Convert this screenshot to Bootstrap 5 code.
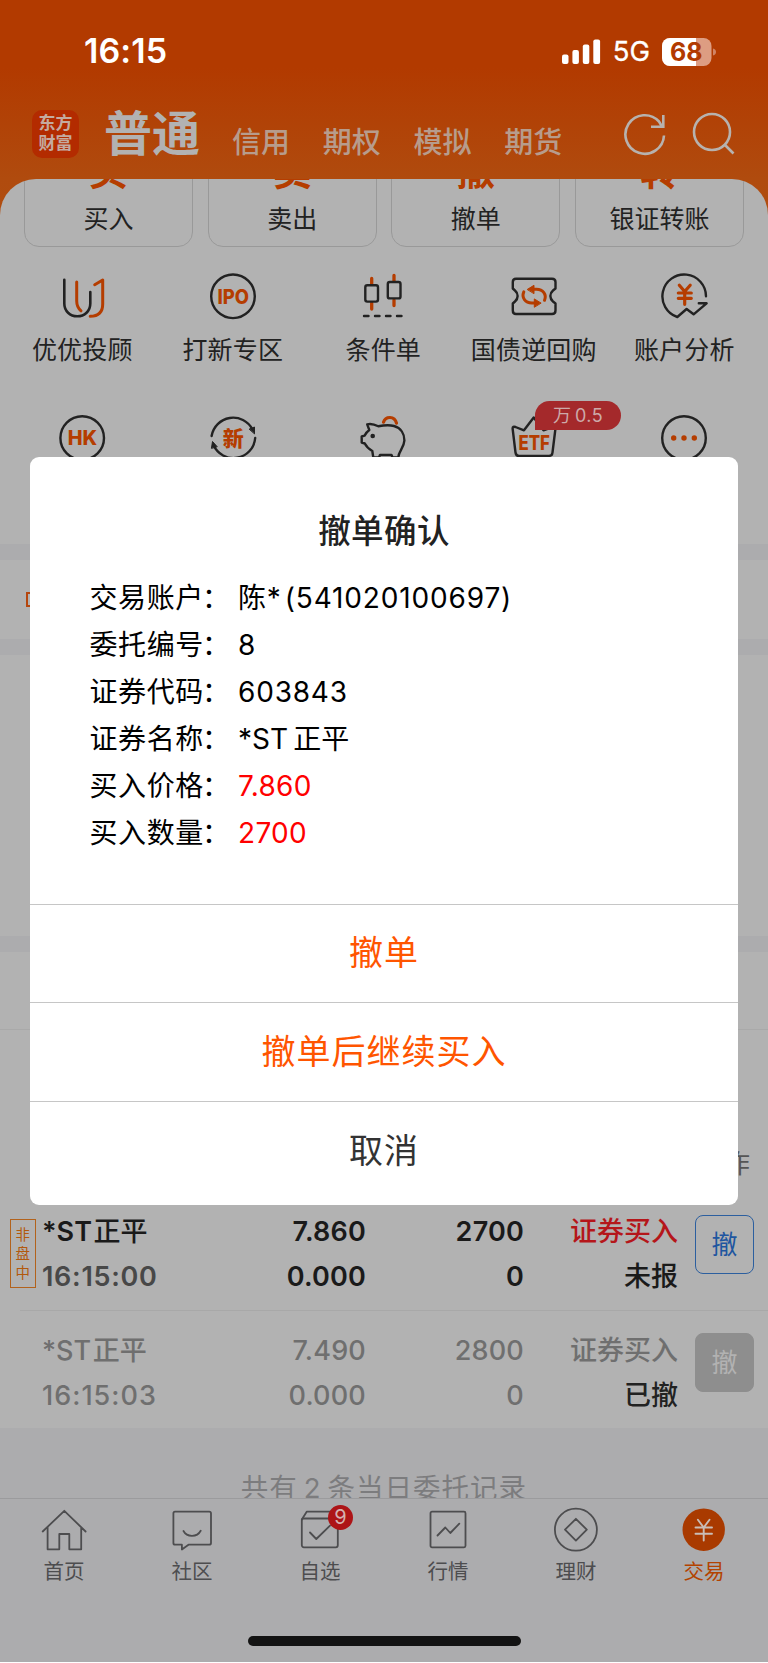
<!DOCTYPE html>
<html lang="zh-CN">
<head>
<meta charset="utf-8">
<meta name="viewport" content="width=device-width, initial-scale=1">
<title>撤单确认</title>
<link rel="stylesheet" href="https://cdn.jsdelivr.net/npm/bootstrap@5.3.0/dist/css/bootstrap.min.css">
<style>
:root{--ink:#222;--flame:#b53d00;--sheet:#b2b2b2;--band:#acacae}
body{font-family:Inter,"Noto Sans CJK SC",sans-serif;background:#fff;color:var(--ink);line-height:1.2}
svg{display:block;fill:none;stroke-linecap:round;stroke-linejoin:round}
svg text{stroke:none;font-family:Inter,"Noto Sans CJK SC",sans-serif}
.screen{width:768px;height:1662px;background:var(--sheet)}
.top-zone{height:220px;background:linear-gradient(#b23a00 0,#b23a00 68px,#b04b0e 179px,#b04d10 100%)}
.status-bar{height:103px;padding:0 52px 0 84px}
.clock{font-size:34px;font-weight:600;letter-spacing:.1px}
.net{font-size:27.5px;font-weight:400;-webkit-text-stroke:.3px #fff;margin-left:12px}
.tabs-line{height:76px;padding:0 33px 0 32px}
.logo{width:47px;height:48px;border-radius:10px;background:#b32b00;color:#c4aaa0;font-size:17px;line-height:20px;font-weight:700;padding-top:3px;margin-top:7px}
.tab-main{font-size:48px;font-weight:700;color:#b2b2b2;margin-left:25px;line-height:62px}
.tab-row{gap:32.7px;margin-left:32px;padding-top:19.5px}
.tab-sub{font-size:29px;font-weight:500;color:#b79c8c;line-height:40px}
.sheet-top{margin-top:-41px;background:var(--sheet);border-radius:36px 36px 0 0;height:365px;overflow:hidden}
.quick{height:68px;padding:0 24px;gap:14.5px}
.quick-item{height:130px;border:1.5px solid #999;border-radius:15px;font-size:25px}
.quick-item b{font-size:39px;line-height:44px;color:var(--flame);font-weight:700}
.quick-item span{line-height:36px;margin:8px 0 9.5px}
.svc{margin:25px 8.5px 0 7px}
.svc .item{width:20%}
.svc .cap{font-size:25px;line-height:30px;margin-top:15px;white-space:nowrap;letter-spacing:.15px}
.svc.second{margin-top:48.5px}
.fee-tag{left:76.5px;top:-13px;width:86px;height:29px;border-radius:14.5px 14.5px 14.5px 0;background:#a4292b;color:#cda9a9;font-size:18px;line-height:29px;letter-spacing:.4px}
.stripe{height:16px;background:var(--band)}
.notice{height:79px;padding-left:26px}
.notice i{width:14px;height:15px;border:2px solid #b5460e}
.hold{height:281px}
.seg{height:78px;border-bottom:1px solid #a9a9a9}
.thead-line{height:161px;padding:0 18px 12px;color:#555;font-size:26px}
.order{height:118.5px;position:relative;font-size:27px;line-height:45px;font-weight:600;padding:18px 14px 0 42px;color:#1a1a1a}
.order>div{white-space:nowrap}
.order .zh{font-weight:500}
.order .c-name .zh{margin-left:-3px}
.order .clk{letter-spacing:.7px}
.order+.order{border-top:1px solid #a8a8a8;margin-left:20px;padding-left:22px;padding-top:17.5px}
.c-name{width:151px}.c-price{width:173px;letter-spacing:.2px}.c-qty{width:158px;letter-spacing:.2px}.c-state{width:154px}
.is-void{color:#6f6f6f}
.is-void .c-name,.is-void .c-price,.is-void .c-qty{font-weight:500}
.is-void .clk{letter-spacing:1px}
.cut{width:59px;height:59px;border:1.5px solid #2c5f9f;border-radius:8px;color:#1f56a0;margin:6px 0 0 17px;font-size:26px;line-height:58px;font-weight:400}
.cut.off{background:#8e8e8e;border-color:#8e8e8e;color:#b2b2b2;margin-top:5px}
.off-hours{left:10px;top:27.5px;width:26px;height:69.5px;border:1.3px solid #b2621c;color:#b2590d;font-size:14.5px;line-height:19px;padding:5px 4.500px 0;font-weight:400}
.tail{height:70px;background:var(--band);overflow:hidden;color:#7c7c7e;font-size:27.5px;line-height:36px;padding-top:42px;letter-spacing:1px}
.tabbar{height:165px;background:var(--band);border-top:1px solid #9b9b9d;padding-top:7px}
.tabbar .item{width:128px;font-size:20.5px;line-height:28px;color:#4d4d4f}
.tabbar .cap{margin-top:3.5px}
.count{left:72px;top:-1px;width:25px;height:25px;border-radius:50%;background:#ad1417;color:#d5b0b0;font-size:20px;line-height:25px}
.home-line{width:273px;height:10px;border-radius:5px;background:#131313;margin:50px auto 0}
.dialog-box{width:708px;height:748px;background:#fff;border-radius:9px}
.dlg-title{font-size:32.5px;font-weight:500;line-height:40px;margin-top:55px;color:#222;letter-spacing:.4px}
.facts{margin:22.5px 0 0 59.5px;color:#000;font-size:28px;line-height:47.1px}
.facts dt{width:148.5px;font-weight:400;letter-spacing:.6px}
.facts dt span{margin-left:-2px}
.facts dd{margin:0}
.facts .acct{letter-spacing:.85px}
.facts .acct span{margin-left:3px}
.facts .code{letter-spacing:.8px}
.facts .hot{color:#f00;letter-spacing:.3px}
.act{height:98.2px;border-top:1.5px solid #c6c6c6;font-size:34px;letter-spacing:1px;color:#ff5500}
.act.dismiss{height:104.5px;color:#333;padding-bottom:4px}
</style>
</head>
<body>
<div class="screen position-relative overflow-hidden">
  <header class="top-zone">
    <div class="status-bar d-flex align-items-center text-white">
      <span class="clock">16:15</span>
      <svg class="ms-auto" width="39" height="26" viewBox="0 0 39 26"><g fill="#fff"><rect y="15.5" width="6.5" height="9.5" rx="2"/><rect x="10.4" y="11" width="6.5" height="14" rx="2"/><rect x="20.8" y="5.5" width="6.5" height="19.5" rx="2"/><rect x="31.3" y=".5" width="6.8" height="24.5" rx="2"/></g></svg>
      <span class="net">5G</span>
      <svg class="ms-2 ps-1" width="58" height="28" viewBox="0 0 54 28"><defs><clipPath id="lvl"><rect width="34" height="28"/></clipPath></defs><rect width="49.5" height="28" rx="8" fill="#dd9d82"/><rect width="49.5" height="28" rx="8" fill="#fff" clip-path="url(#lvl)"/><path d="M51 10.5q3 .8 3 3.5t-3 3.500z" fill="#d08465"/><text x="24.300" y="22.800" text-anchor="middle" font-size="25" font-weight="700" fill="#b23a00">68</text></svg>
    </div>
    <nav class="tabs-line d-flex">
      <div class="logo text-center">东方<br>财富</div>
      <div class="tab-main">普通</div>
      <div class="tab-row d-flex">
        <span class="tab-sub">信用</span><span class="tab-sub">期权</span><span class="tab-sub">模拟</span><span class="tab-sub">期货</span>
      </div>
      <svg class="ms-auto mt-2" width="44" height="46" viewBox="0 0 44 46" stroke="#b7b2ae" stroke-width="2.600"><path stroke-linecap="butt" stroke-linejoin="miter" d="M41 24.500A19.300 19.300 0 1 1 36 10.500L39 15.500M40.300 4V15.800H28"/></svg>
      <svg class="mt-2" style="margin-left:23.5px" width="45" height="46" viewBox="0 0 45 46" stroke="#b7b2ae" stroke-width="2.600"><circle cx="22" cy="21" r="18"/><path stroke-linecap="butt" d="M34.500 33.500L43.500 42.500"/></svg>
    </nav>
  </header>

  <section class="sheet-top position-relative">
    <div class="quick d-flex align-items-end">
      <div class="quick-item flex-fill w-25 d-flex flex-column justify-content-end align-items-center"><b>买</b><span>买入</span></div>
      <div class="quick-item flex-fill w-25 d-flex flex-column justify-content-end align-items-center"><b>卖</b><span>卖出</span></div>
      <div class="quick-item flex-fill w-25 d-flex flex-column justify-content-end align-items-center"><b>撤</b><span>撤单</span></div>
      <div class="quick-item flex-fill w-25 d-flex flex-column justify-content-end align-items-center"><b>转</b><span>银证转账</span></div>
    </div>
    <div class="svc d-flex">
      <div class="item d-flex flex-column align-items-center">
        <svg width="48" height="48" stroke="#222" stroke-width="2.600"><path d="M6.300 7.700V31.500C6.300 39 12 44.300 19.300 44.300S32.300 39 32.300 31.500V20"/><g stroke="#b53d00" stroke-width="3"><path d="M18.700 10V29Q18.700 35 23 38.800M36.700 12.700L44.700 8V32Q44.700 44.300 32.200 44.300"/></g></svg>
        <div class="cap">优优投顾</div>
      </div>
      <div class="item d-flex flex-column align-items-center">
        <svg width="48" height="48" stroke="#222" stroke-width="2.400"><circle cx="24" cy="24.300" r="21.800"/><text x="24.200" y="31.500" text-anchor="middle" textLength="31.500" lengthAdjust="spacingAndGlyphs" font-size="20" font-weight="800" fill="#b53d00">IPO</text></svg>
        <div class="cap">打新专区</div>
      </div>
      <div class="item d-flex flex-column align-items-center">
        <svg width="48" height="48" stroke="#222" stroke-width="2.400"><path stroke="#b53d00" stroke-width="3.300" d="M12.700 6.500V12M12.700 31V37M35 3.500V9M35 28V33.500"/><rect x="6.300" y="13.200" width="12.700" height="16.400" rx="2"/><rect x="28.800" y="10" width="12.700" height="16.400" rx="2"/><path d="M5 44h4.500M16 44h4.500M27 44h4.500M38 44h4.500"/></svg>
        <div class="cap">条件单</div>
      </div>
      <div class="item d-flex flex-column align-items-center">
        <svg width="48" height="48" stroke="#222" stroke-width="2.400"><path d="M6 6.700H42Q45.500 6.700 45.500 10V16.500L43 18.500C39.500 21.500 39.500 26.500 43 29.500L45.500 31.500V38.500Q45.500 42 42 42H6Q2.800 42 2.800 38.500V31.500L5 29.500C8.500 26.500 8.500 21.500 5 18.500L2.800 16.500V10Q2.800 6.700 6 6.700Z"/><g stroke="#b53d00" stroke-width="3"><path d="M22 17.300H26.500C33 17.300 37 22.500 34.500 28.300M26.300 30.900H21.800C15.300 30.900 11.300 25.700 13.800 19.900"/><path fill="#b53d00" stroke-width="1" d="M17.500 17.300L24 13.300V21.300ZM30.800 30.900L24.300 26.900V34.900Z"/></g></svg>
        <div class="cap">国债逆回购</div>
      </div>
      <div class="item d-flex flex-column align-items-center">
        <svg width="48" height="48" stroke="#222" stroke-width="2.400"><path d="M46 24.300A21.800 21.800 0 1 0 17.300 45L26.600 37L33.600 42.300L46.600 31.300H38.800"/><path stroke="#b53d00" stroke-width="3.200" d="M19.300 13.300L24.700 19.500L30.200 13.300M24.700 19.500V32.300M18.300 21H31.300M18.300 26.300H31.300"/></svg>
        <div class="cap">账户分析</div>
      </div>
    </div>
    <div class="svc second d-flex">
      <div class="item d-flex justify-content-center">
        <svg width="48" height="48" stroke="#222" stroke-width="2.400"><circle cx="24.200" cy="24" r="21.800"/><text x="24.500" y="31.300" text-anchor="middle" textLength="29.500" lengthAdjust="spacingAndGlyphs" font-size="20" font-weight="800" fill="#b53d00">HK</text></svg>
      </div>
      <div class="item d-flex justify-content-center">
        <svg width="48" height="48" stroke="#222" stroke-width="2.400"><path d="M2.600 22A21.800 21.800 0 0 1 43.500 15.500M46.200 24A21.800 21.800 0 0 1 4.500 31"/><path fill="#222" stroke-width="1" d="M40.500 15L45.500 13V19.500ZM2.500 34L3.500 27.500L8 32.500Z"/><text x="24.300" y="31.500" text-anchor="middle" font-size="21" font-weight="900" fill="#b53d00">新</text></svg>
      </div>
      <div class="item d-flex justify-content-center">
        <svg width="48" height="48" stroke="#222" stroke-width="2.400"><path stroke="#b53d00" stroke-width="3.200" d="M24.500 8.200C26.500 2 35.500 1.500 37.500 9.200"/><path d="M8.200 10.300Q13 9 19.300 12.300C26 11 31 11 35 12C42 14 45.500 20 45.400 26.500C45 34 39.500 37 39.300 43.500H33.500L32.500 41H21L20 43.500H14.300L13.300 37Q8 34 5.800 29.500L2.700 28.500V22.500L5.500 21.700Q7 18.500 10.300 16Z"/><circle cx="13.700" cy="22" r="2.300" fill="#222" stroke="none"/></svg>
      </div>
      <div class="item d-flex justify-content-center position-relative">
        <svg width="48" height="48" stroke="#222" stroke-width="2.400"><path d="M2.600 14.500Q2.600 12 5.500 13L14 16.300L23.700 3.500L33.500 16.300L42.500 13Q46 12 45.400 15L42.500 38.500Q42.200 42 39 42H9Q6 42 5.500 38.500Z"/><text x="24.200" y="35.800" text-anchor="middle" textLength="31.500" lengthAdjust="spacingAndGlyphs" font-size="20" font-weight="800" fill="#b53d00">ETF</text></svg>
        <span class="fee-tag position-absolute text-center">万&#8201;0.5</span>
      </div>
      <div class="item d-flex justify-content-center">
        <svg width="48" height="48" stroke="#222" stroke-width="2.400"><circle cx="24" cy="24" r="21.800"/><g fill="#b53d00" stroke="none"><circle cx="13.700" cy="24" r="2.700"/><circle cx="24" cy="24" r="2.700"/><circle cx="34.300" cy="24" r="2.700"/></g></svg>
      </div>
    </div>
  </section>

  <div class="stripe"></div>
  <div class="notice d-flex align-items-center"><i></i></div>
  <div class="stripe"></div>
  <div class="hold"></div>
  <div class="stripe"></div>
  <div class="seg"></div>
  <div class="thead-line d-flex align-items-end justify-content-end">操作</div>

  <div class="order d-flex">
    <span class="off-hours position-absolute">非盘中</span>
    <div class="c-name">*ST&#8201;<span class="zh">正平</span><br><span class="clk" style="color:#484848">16:15:00</span></div>
    <div class="c-price text-end">7.860<br>0.000</div>
    <div class="c-qty text-end">2700<br>0</div>
    <div class="c-state text-end zh"><span style="color:#b5161a">证券买入</span><br>未报</div>
    <div class="cut text-center">撤</div>
  </div>
  <div class="order d-flex is-void">
    <div class="c-name">*ST&#8201;<span class="zh">正平</span><br><span class="clk">16:15:03</span></div>
    <div class="c-price text-end">7.490<br>0.000</div>
    <div class="c-qty text-end">2800<br>0</div>
    <div class="c-state text-end zh">证券买入<br><span style="color:#222">已撤</span></div>
    <div class="cut off text-center">撤</div>
  </div>
  <div class="tail text-center">共有&#8201;2&#8201;条当日委托记录</div>

  <footer class="tabbar">
    <div class="d-flex text-center">
      <div class="item d-flex flex-column align-items-center"><svg width="48" height="48" stroke="#4d4d4f" stroke-width="1.800"><path d="M2.700 25.500L24.300 4.800L45.600 25.500M7.600 21.300V43.300H19.300V28H29.300V43.300H41.200V21.300"/></svg><div class="cap">首页</div></div>
      <div class="item d-flex flex-column align-items-center"><svg width="48" height="48" stroke="#4d4d4f" stroke-width="1.800"><path d="M7 5.600H41.200Q43 5.600 43 7.400V37Q43 38.700 41.200 38.700H20.500L13.900 43.500V38.700H7Q5.400 38.700 5.400 37V7.400Q5.400 5.600 7 5.600ZM15.500 25C19 31.500 29 31.500 32.700 24.700"/></svg><div class="cap">社区</div></div>
      <div class="item d-flex flex-column align-items-center position-relative"><svg width="48" height="48" stroke="#4d4d4f" stroke-width="1.800"><rect x="5.800" y="12.500" width="36" height="28.800" rx="2"/><path d="M5.800 13.500L10.700 5.700H40Q41.800 5.700 41.800 7.500V14M14 26.500L20.300 33L34 19.700"/></svg><span class="count position-absolute text-center">9</span><div class="cap">自选</div></div>
      <div class="item d-flex flex-column align-items-center"><svg width="48" height="48" stroke="#4d4d4f" stroke-width="1.800"><rect x="6.500" y="5.700" width="35" height="35.600" rx="1.500"/><path d="M13.500 29.500L21.300 21.500L26.300 27L35.300 17.700"/></svg><div class="cap">行情</div></div>
      <div class="item d-flex flex-column align-items-center"><svg width="48" height="48" stroke="#4d4d4f" stroke-width="1.800"><circle cx="23.900" cy="23.700" r="21"/><path d="M23.900 12.800L34.800 23.700L23.900 34.600L13 23.700Z"/></svg><div class="cap">理财</div></div>
      <div class="item d-flex flex-column align-items-center"><svg width="48" height="48" stroke="#c9bdb6" stroke-width="1.900"><circle cx="23.700" cy="23.700" r="21.200" fill="#a93a00" stroke="none"/><path d="M17.900 13.700L23.700 21.500L29.500 13.700M23.700 21.500V34.500M15.500 21.500H32M15.500 27.700H32"/></svg><div class="cap" style="color:#b34300">交易</div></div>
    </div>
    <div class="home-line"></div>
  </footer>

  <div class="position-absolute top-0 start-0 w-100 h-100 d-flex align-items-center justify-content-center">
    <div class="dialog-box d-flex flex-column overflow-hidden" role="dialog">
      <div class="dlg-title text-center">撤单确认</div>
      <dl class="facts mb-auto">
        <div class="d-flex"><dt>交易账户<span>：</span></dt><dd class="acct">陈*<span>(541020100697)</span></dd></div>
        <div class="d-flex"><dt>委托编号<span>：</span></dt><dd>8</dd></div>
        <div class="d-flex"><dt>证券代码<span>：</span></dt><dd class="code">603843</dd></div>
        <div class="d-flex"><dt>证券名称<span>：</span></dt><dd>*ST&#8201;正平</dd></div>
        <div class="d-flex"><dt>买入价格<span>：</span></dt><dd class="hot">7.860</dd></div>
        <div class="d-flex"><dt>买入数量<span>：</span></dt><dd class="hot">2700</dd></div>
      </dl>
      <div class="act d-flex align-items-center justify-content-center">撤单</div>
      <div class="act d-flex align-items-center justify-content-center">撤单后继续买入</div>
      <div class="act dismiss d-flex align-items-center justify-content-center">取消</div>
    </div>
  </div>
</div>
<script src="https://cdn.jsdelivr.net/npm/bootstrap@5.3.0/dist/js/bootstrap.bundle.min.js"></script>
</body>
</html>
